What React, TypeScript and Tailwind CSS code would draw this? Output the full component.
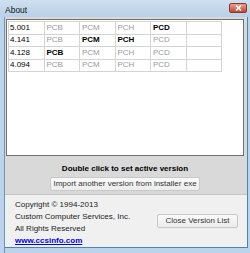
import React from "react";

const rows = [
  { v: "5.001", act: [false, false, false, true] },
  { v: "4.141", act: [false, true, true, false] },
  { v: "4.128", act: [true, false, false, false] },
  { v: "4.094", act: [false, false, false, false] },
];
const names = ["PCB", "PCM", "PCH", "PCD"];

export default function App() {
  return (
    <div
      className="w-[250px] h-[253px] bg-[#bcd3eb] relative overflow-hidden"
      style={{ fontFamily: "Tahoma, 'Liberation Sans', Arial, sans-serif" }}
    >
      {/* title bar */}
      <div className="h-[17px] flex items-center justify-between pl-[5px] pr-[3px] bg-gradient-to-b from-[#cfe0f1] to-[#b9d0e8]">
        <span className="text-[8.5px] text-[#111] leading-none mt-[3px]">About</span>
        <div className="w-[18px] h-[10px] mb-[1px] rounded-[2px] bg-gradient-to-b from-[#e8a08c] to-[#c2452e] border border-[#8a3a2c] flex items-center justify-center">
          <svg width="7" height="6" viewBox="0 0 7 6">
            <path d="M1 0.5 L6 5.5 M6 0.5 L1 5.5" stroke="white" strokeWidth="1.6" />
          </svg>
        </div>
      </div>
      <div className="absolute left-0 top-[17px] w-[5px] h-[236px] border-r border-[#6e95b8]" />
      <div className="ml-[5px] w-[243px] h-[231px] flex flex-col border-r border-b border-[#4b86ae]">
        {/* top grey section */}
        <div className="bg-[#d9d9d9] h-[181px] pt-[2px] pl-[1px] pr-[3px] flex flex-col">
          <div className="h-[137px] bg-white border border-[#707070] p-[1px]">
            <table className="border-collapse text-[8px] leading-none">
              <tbody>
                {rows.map((r) => (
                  <tr key={r.v}>
                    <td className="w-[35.5px] h-[12.5px] border border-[#d4d4d4] pl-[1px] text-black">{r.v}</td>
                    {names.map((n, i) => (
                      <td
                        key={n}
                        className={`w-[35.5px] h-[12.5px] border border-[#d4d4d4] pl-[2px] ${r.act[i] ? "text-black font-bold" : "text-[#9a9a9a]"}`}
                      >
                        {n}
                      </td>
                    ))}
                    <td className="w-[35.5px] h-[12.5px] border border-[#d4d4d4]"></td>
                  </tr>
                ))}
              </tbody>
            </table>
          </div>
          <div className="mt-[9px] text-center text-[8px] font-bold text-black leading-none">
            Double click to set active version
          </div>
          <div className="flex justify-center mt-[4px]">
            <div className="h-[14px] px-[2px] bg-gradient-to-b from-[#fafafa] to-[#ececec] border border-[#c8c8c8] rounded-[2px] text-[8px] text-[#333] flex items-center">
              Import another version from installer exe
            </div>
          </div>
        </div>
        {/* bottom */}
        <div className="flex-1 bg-[#f0f0f0] border-t border-[#c4c4c4] flex items-start justify-between pl-[10px] pr-[9px] pt-[4px]">
          <div className="text-[8px] leading-[12px] text-[#222]">
            <div>Copyright © 1994-2013</div>
            <div>Custom Computer Services, Inc.</div>
            <div>All Rights Reserved</div>
            <div className="text-[#0000ee] font-bold underline">www.ccsinfo.com</div>
          </div>
          <div className="mt-[15px] w-[81px] h-[14px] bg-gradient-to-b from-[#fafafa] to-[#ececec] border border-[#c8c8c8] rounded-[2px] text-[8px] text-[#333] flex items-center justify-center">
            Close Version List
          </div>
        </div>
      </div>
    </div>
  );
}
